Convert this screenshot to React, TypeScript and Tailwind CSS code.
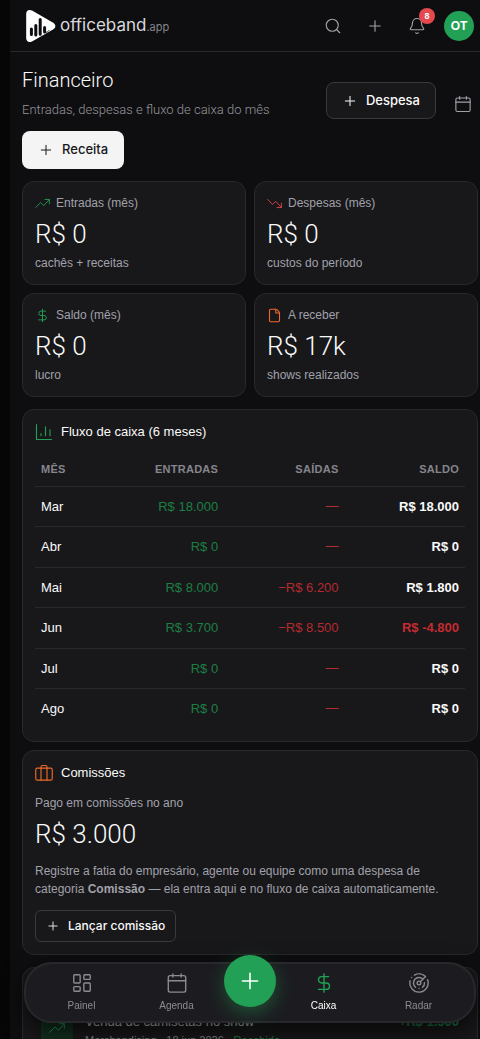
import type { ReactNode } from "react";
import { Bell, DollarSign, File, LayoutDashboard, Plus, Radar, Search } from "lucide-react";

function Logo() {
  return (
    <a href="#" aria-label="officeband.app" className="flex items-center gap-1">
      <svg width="32" height="36" viewBox="0 0 32 36" aria-hidden="true">
        <path
          d="M2.2 6C2.2 2.2 5 1 8 2.6L28.8 14.4C32.2 16.4 32.2 19.6 29 21.6L8 33.4C5 35 2.2 33.6 2.2 30Z"
          fill="#fff"
        />
        <g stroke="#0e0e10" strokeWidth="3" strokeLinecap="round">
          <path d="M7.4 21v5.5M11.8 17.6v9.4M16.2 11.5v14.8M20.6 19.6v4.4" />
        </g>
        <path d="M21 24.4c1.8.2 3.2-.8 4.2-2.2" stroke="#0e0e10" strokeWidth=".9" fill="none" />
      </svg>
      <span className="font-[Inter] text-[17px] leading-6 text-[#d9d9dc]">
        officeband<span className="text-[11px] text-[#85858c]">.app</span>
      </span>
    </a>
  );
}

function CalendarIcon({ size }: { size: number }) {
  return (
    <svg
      width={size}
      height={size}
      viewBox="0 0 24 24"
      fill="none"
      stroke="currentColor"
      strokeWidth="1.5"
      strokeLinecap="round"
      strokeLinejoin="round"
      aria-hidden="true"
    >
      <rect x="2.5" y="4" width="19" height="18" rx="2" />
      <path d="M7.5 2v3.5M16.5 2v3.5M2.5 9.5h19" />
    </svg>
  );
}

function Trend({ size, down = false, className }: { size: number; down?: boolean; className: string }) {
  return (
    <svg
      width={size}
      height={size}
      viewBox="0 0 24 24"
      fill="none"
      stroke="currentColor"
      strokeWidth="1.4"
      strokeLinecap="round"
      strokeLinejoin="round"
      className={className}
      aria-hidden="true"
    >
      <path
        d={down ? "M1 5.5l8 8 5-5 9 10M16 18.5h7v-7" : "M1 18.5l8-8 5 5 9-10M16 5.5h7v7"}
      />
    </svg>
  );
}

function StatCard({ icon, label, value, note }: { icon: ReactNode; label: string; value: string; note: string }) {
  return (
    <section className="rounded-xl border border-[#29292c] bg-[#18181a] p-3">
      <h2 className="flex items-center gap-1.5 text-xs leading-[18px] text-[#a1a1aa]">
        {icon}
        {label}
      </h2>
      <p className="mt-1 font-[Roboto] text-[26px] leading-9 font-light text-[#fafafa]">{value}</p>
      <p className="mt-0.5 text-xs leading-[18px] text-[#a1a1aa]">{note}</p>
    </section>
  );
}

const months = [
  { name: "Mar", income: "R$ 18.000", expense: "", balance: "R$ 18.000", negative: false },
  { name: "Abr", income: "R$ 0", expense: "", balance: "R$ 0", negative: false },
  { name: "Mai", income: "R$ 8.000", expense: "−R$ 6.200", balance: "R$ 1.800", negative: false },
  { name: "Jun", income: "R$ 3.700", expense: "−R$ 8.500", balance: "R$ -4.800", negative: true },
  { name: "Jul", income: "R$ 0", expense: "", balance: "R$ 0", negative: false },
  { name: "Ago", income: "R$ 0", expense: "", balance: "R$ 0", negative: false },
];

function NavItem({ icon, label, active = false }: { icon: ReactNode; label: string; active?: boolean }) {
  return (
    <a
      href="#"
      className={
        active
          ? "flex flex-1 flex-col items-center gap-1 text-[10px] leading-4 text-white"
          : "flex flex-1 flex-col items-center gap-1 text-[10px] leading-4 text-[#8b8b92]"
      }
    >
      {icon}
      {label}
    </a>
  );
}

export default function App() {
  return (
    <div className="min-h-screen bg-[#060607] pl-2.5 font-['Liberation_Sans',sans-serif] text-[#fafafa]">
      <div className="min-h-screen bg-[#0e0e10]">
        <header className="flex h-[52px] items-center justify-between border-b border-[#29292c] pr-1.5 pl-3.5">
          <Logo />
          <div className="flex items-center gap-3 text-[#a1a1aa]">
            <button aria-label="Buscar" className="grid size-[30px] place-items-center">
              <Search size={18} strokeWidth={1.5} />
            </button>
            <button aria-label="Adicionar" className="grid size-[30px] place-items-center">
              <Plus size={18} strokeWidth={1.5} />
            </button>
            <button aria-label="Notificações" className="relative grid size-[30px] place-items-center">
              <Bell size={18} strokeWidth={1.5} />
              <span className="absolute -top-[3px] -right-[3px] grid size-4 place-items-center rounded-full bg-[#e5484d] text-[9px] leading-4 font-bold text-white">
                8
              </span>
            </button>
            <button className="grid size-[30px] place-items-center rounded-full bg-[#22a055] text-xs font-bold text-white">
              OT
            </button>
          </div>
        </header>

        <main className="pt-3 pr-0.5 pl-3">
          <div className="flex flex-wrap items-end gap-3">
            <div className="flex-1">
              <h1 className="font-[Roboto] text-xl leading-8 font-light">Financeiro</h1>
              <p className="mt-[5px] font-[Roboto] text-[13px] leading-[18px] font-light whitespace-nowrap text-[#94949b]">
                Entradas, despesas e fluxo de caixa do mês
              </p>
            </div>
            <button className="flex h-[37px] items-center gap-2 rounded-lg border border-[#3a3a3e] bg-[#18181a] px-[15px] font-[Inter] text-[13px] font-medium">
              <Plus size={16} strokeWidth={1.5} />
              Despesa
            </button>
            <button aria-label="Calendário" className="grid size-[30px] place-items-center text-[#a1a1aa]">
              <CalendarIcon size={18} />
            </button>
            <div className="w-full">
              <button className="flex h-[38px] items-center gap-2 rounded-lg bg-[#f4f4f5] px-4 font-[Inter] text-[13px] font-medium text-[#18181b]">
                <Plus size={16} strokeWidth={1.5} />
                Receita
              </button>
            </div>
          </div>

          <div className="mt-3 grid grid-cols-2 gap-2">
            <StatCard
              icon={<Trend size={15} className="text-[#22a055]" />}
              label="Entradas (mês)"
              value="R$ 0"
              note="cachês + receitas"
            />
            <StatCard
              icon={<Trend size={15} down className="text-[#e5484d]" />}
              label="Despesas (mês)"
              value="R$ 0"
              note="custos do período"
            />
            <StatCard
              icon={<DollarSign size={15} strokeWidth={1.5} className="text-[#22a055]" />}
              label="Saldo (mês)"
              value="R$ 0"
              note="lucro"
            />
            <StatCard
              icon={<File size={15} strokeWidth={1.75} className="text-[#ed6a2c]" />}
              label="A receber"
              value="R$ 17k"
              note="shows realizados"
            />
          </div>

          <section className="mt-3 rounded-xl border border-[#29292c] bg-[#18181a] p-3">
            <h2 className="flex items-center gap-2 text-[13px] leading-5">
              <svg
                width="18"
                height="18"
                viewBox="0 0 24 24"
                fill="none"
                stroke="#22a055"
                strokeWidth="1.5"
                strokeLinecap="round"
                strokeLinejoin="round"
                aria-hidden="true"
              >
                <path d="M2 2v20h20M8 17v-3M14 17V5M20 17V9" />
              </svg>
              Fluxo de caixa (6 meses)
            </h2>
            <table className="mt-[11px] w-full table-fixed border-collapse text-[13px] leading-normal">
              <thead>
                <tr className="border-b border-[#29292c] text-[11px] text-[#85858c]">
                  <th scope="col" className="w-[16%] px-1.5 py-2 text-left font-bold tracking-wide">MÊS</th>
                  <th scope="col" className="w-[28%] px-1.5 py-2 text-right font-bold tracking-wide">ENTRADAS</th>
                  <th scope="col" className="w-[28%] px-1.5 py-2 text-right font-bold tracking-wide">SAÍDAS</th>
                  <th scope="col" className="w-[28%] px-1.5 py-2 text-right font-bold tracking-wide">SALDO</th>
                </tr>
              </thead>
              <tbody>
                {months.map((m) => (
                  <tr key={m.name} className="border-b border-[#29292c] last:border-0">
                    <td className="px-1.5 py-2.5">{m.name}</td>
                    <td className="px-1.5 py-2.5 text-right text-[#1c7f45]">{m.income}</td>
                    <td className="px-1.5 py-2.5 text-right text-[#b52a30]">
                      {m.expense || <span className="font-[Inter] leading-none">—</span>}
                    </td>
                    <td
                      className={
                        m.negative
                          ? "px-1.5 py-2.5 text-right font-bold text-[#c42b31]"
                          : "px-1.5 py-2.5 text-right font-bold"
                      }
                    >
                      {m.balance}
                    </td>
                  </tr>
                ))}
              </tbody>
            </table>
          </section>

          <section className="mt-2 rounded-xl border border-[#29292c] bg-[#18181a] p-3">
            <h2 className="flex items-center gap-2 text-[13px] leading-5">
              <svg
                width="18"
                height="18"
                viewBox="0 0 24 24"
                fill="none"
                stroke="#ed6a2c"
                strokeWidth="1.5"
                strokeLinecap="round"
                strokeLinejoin="round"
                aria-hidden="true"
              >
                <rect x="1" y="5.5" width="22" height="16" rx="2" />
                <path d="M8 21.5V4a2 2 0 0 1 2-2h4a2 2 0 0 1 2 2v17.5" />
              </svg>
              Comissões
            </h2>
            <p className="mt-[11px] text-xs leading-[18px] text-[#a1a1aa]">Pago em comissões no ano</p>
            <p className="mt-1 font-[Roboto] text-[26px] leading-9 font-light">R$ 3.000</p>
            <p className="mt-2.5 text-xs leading-[18px] text-[#a1a1aa]">
              Registre a fatia do empresário, agente ou equipe como uma despesa de categoria <strong>Comissão</strong> — ela
              entra aqui e no fluxo de caixa automaticamente.
            </p>
            <button className="mt-3 flex h-8 items-center gap-2 rounded-md border border-[#3a3a3e] px-2.5 font-[Inter] text-xs font-medium">
              <Plus size={14} strokeWidth={1.5} />
              Lançar comissão
            </button>
          </section>

          <section className="mt-3 rounded-xl border border-[#29292c] bg-[#18181a] px-[18px] pt-11 pb-24">
            <div className="flex items-center gap-3">
              <span className="grid size-8 place-items-center rounded-md bg-[#12301f] text-[#22a055]">
                <Trend size={16} className="-mt-1" />
              </span>
              <div className="flex-1">
                <p className="text-[13px] leading-5 text-[#c4c4c8]">Venda de camisetas no show</p>
                <p className="text-[11px] leading-4 text-[#85858c]">
                  Merchandising · 18 jun 2026 · <span className="text-[#1c7f45]">Recebido</span>
                </p>
              </div>
              <p className="self-start text-[13px] leading-5 font-bold text-[#1c7f45]">+R$ 1.500</p>
            </div>
          </section>
        </main>
      </div>

      <nav
        aria-label="Principal"
        className="fixed right-1 bottom-4 left-6 flex h-[61px] items-start rounded-[28px] border-2 border-[#28282c] bg-[#1c1c20] px-2 pt-2 shadow-[0_8px_24px_rgba(0,0,0,0.7)]"
      >
        <NavItem icon={<LayoutDashboard size={22} strokeWidth={1.5} />} label="Painel" />
        <NavItem icon={<CalendarIcon size={22} />} label="Agenda" />
        <button
          aria-label="Novo"
          className="-mt-[17px] grid size-[52px] place-items-center rounded-full bg-[#22a055] text-white shadow-[0_6px_18px_rgba(34,160,85,0.4)]"
        >
          <Plus size={26} strokeWidth={1.5} />
        </button>
        <NavItem active icon={<DollarSign size={22} strokeWidth={1.5} className="text-[#22a055]" />} label="Caixa" />
        <NavItem icon={<Radar size={22} strokeWidth={1.5} />} label="Radar" />
      </nav>
    </div>
  );
}
